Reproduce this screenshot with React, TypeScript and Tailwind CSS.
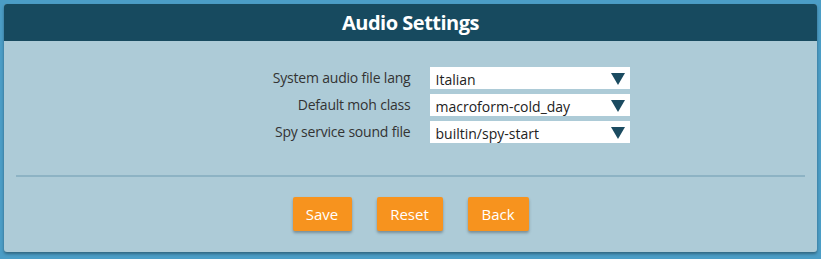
import { useState } from 'react'

type Field = { label: string; value: string; options: string[] }

const fields: Field[] = [
  { label: 'System audio file lang', value: 'Italian', options: ['Italian', 'English', 'French', 'German', 'Spanish'] },
  { label: 'Default moh class', value: 'macroform-cold_day', options: ['macroform-cold_day', 'default', 'ringback'] },
  { label: 'Spy service sound file', value: 'builtin/spy-start', options: ['builtin/spy-start', 'builtin/beep'] },
]

function Select({ value, options, onChange }: { value: string; options: string[]; onChange: (v: string) => void }) {
  return (
    <div className="relative w-[200px] h-[22px] bg-white">
      <select
        value={value}
        onChange={e => onChange(e.target.value)}
        className="appearance-none w-full h-full bg-transparent pl-[6px] pr-6 text-[14px] text-[#222] outline-none"
      >
        {options.map(o => <option key={o} value={o}>{o}</option>)}
      </select>
      <svg className="absolute right-[5px] top-[6px] pointer-events-none" width="14" height="12" viewBox="0 0 14 12">
        <polygon points="0,0 14,0 7,12" fill="#1b4b60" />
      </svg>
    </div>
  )
}

export default function App() {
  const [values, setValues] = useState(fields.map(f => f.value))

  return (
    <div className="w-[821px] h-[259px] bg-[#4b9dc6] pt-1 px-1" style={{ fontFamily: '"Open Sans", "Noto Sans", sans-serif' }}>
      <div className="h-[248px] bg-[#adcbd7] rounded-[3px] shadow-[0_2px_3px_rgba(0,0,0,0.35)] flex flex-col">
        <header className="h-[37px] bg-[#174a5f] rounded-t-[3px] flex items-center justify-center">
          <h1 className="text-white text-[20px] font-bold tracking-tight">Audio Settings</h1>
        </header>

        <div className="pt-[26px] grid grid-cols-2 gap-y-[5px]">
          {fields.map((f, i) => (
            <div key={f.label} className="contents">
              <label className="text-right text-[14px] text-[#333] leading-[22px] tracking-[-0.2px]">{f.label}</label>
              <div className="pl-[19px]">
                <Select
                  value={values[i]}
                  options={f.options}
                  onChange={v => setValues(values.map((x, j) => (j === i ? v : x)))}
                />
              </div>
            </div>
          ))}
        </div>

        <div className="mx-3 mt-[32px] border-t-2 border-[#8db3c4]" />

        <div className="mt-[20px] flex justify-center gap-[25px]">
          <button className="h-[34px] w-[59px] bg-[#f7931e] text-white text-[15px] rounded-[2px] shadow-[0_2px_3px_rgba(0,0,0,0.3)]">Save</button>
          <button className="h-[34px] w-[66px] bg-[#f7931e] text-white text-[15px] rounded-[2px] shadow-[0_2px_3px_rgba(0,0,0,0.3)]">Reset</button>
          <button className="h-[34px] w-[61px] bg-[#f7931e] text-white text-[15px] rounded-[2px] shadow-[0_2px_3px_rgba(0,0,0,0.3)]">Back</button>
        </div>
      </div>
    </div>
  )
}
